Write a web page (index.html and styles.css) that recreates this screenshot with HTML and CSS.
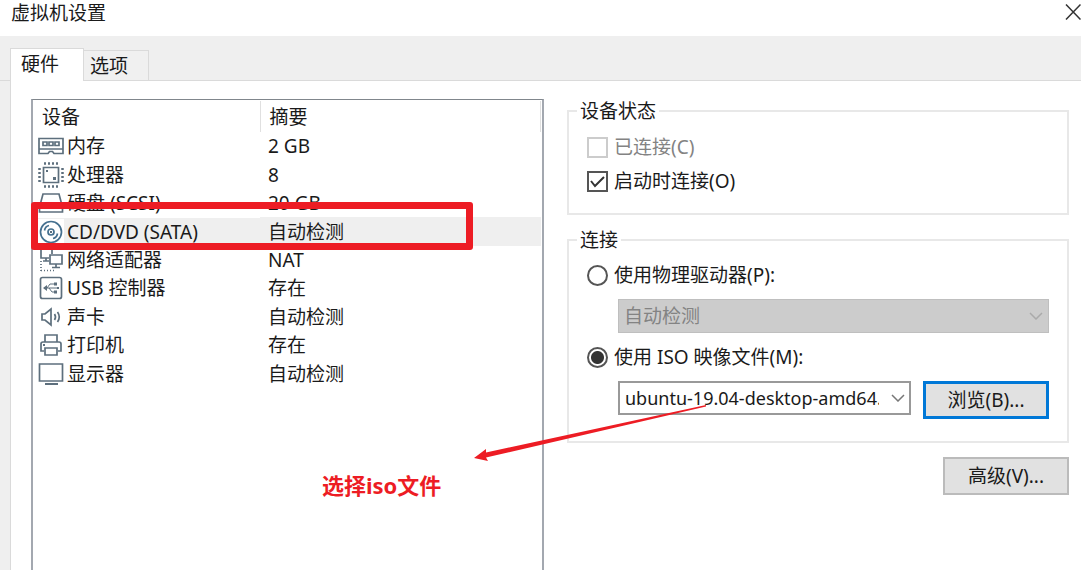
FILE: index.html
```html
<!DOCTYPE html>
<html lang="zh-CN">
<head>
    <meta charset="UTF-8">
    <meta name="viewport" content="width=device-width, initial-scale=1.0">
    <title>虚拟机设置</title>
    <link rel="stylesheet" href="styles.css">
</head>
<body>
    <div class="window">
        <header class="titlebar">
            <h1>虚拟机设置</h1>
            <button class="close-btn" aria-label="关闭">
                <svg width="16" height="16" viewBox="0 0 16 16"><path d="M1 0.5L15.5 15.5M15.5 0.5L1 15.5"/></svg>
            </button>
        </header>

        <div class="tabs">
            <button class="tab active">硬件</button>
            <button class="tab">选项</button>
        </div>

        <main class="panel">
            <div class="device-list">
                <table class="devices">
                    <thead>
                        <tr><th class="name-col">设备</th><th>摘要</th></tr>
                    </thead>
                    <tbody>
                        <tr>
                            <td><div class="device">
                                <svg class="icon" viewBox="0 0 26 26"><path d="M1 5.500h24v15H16l-1.500-2h-3l-1.500 2H1zM1 16h24M5 9h4v3.500H5zM11 9h4v3.500h-4zM17 9h4v3.500h-4z"/></svg>
                                内存</div></td>
                            <td>2 GB</td>
                        </tr>
                        <tr>
                            <td><div class="device">
                                <svg class="icon" viewBox="0 0 26 26"><path d="M5.500 5.500h15v15h-15z"/><path class="pins" d="M6 1.500h15M6 24.500h15M1.500 6v15M24.500 6v15"/><path class="fill" d="M8 8h2v2H8zM15 15h3v3h-3z"/></svg>
                                处理器</div></td>
                            <td>8</td>
                        </tr>
                        <tr>
                            <td><div class="device">
                                <svg class="icon" viewBox="0 0 26 26"><path d="M5 4h16l3.500 13v5h-23v-5zM1.500 17h23"/></svg>
                                硬盘 (SCSI)</div></td>
                            <td>20 GB</td>
                        </tr>
                        <tr class="selected">
                            <td><div class="device">
                                <svg class="icon disc" viewBox="0 0 26 26"><circle cx="13" cy="13" r="10.500"/><circle cx="13" cy="13" r="3"/><path class="fill" d="M12 12h2v2h-2z"/><path d="M6.500 11.500c.5-3 2-4.500 4.500-5M19.500 14.500c-.5 3-2 4.500-4.500 5"/></svg>
                                CD/DVD (SATA)</div></td>
                            <td>自动检测<span class="highlight-box"></span></td>
                        </tr>
                        <tr>
                            <td><div class="device">
                                <svg class="icon" viewBox="0 0 26 26"><path d="M11 11H3V1h11v6M5 14h6M8 11v3M12 8h12v9H12zM18 17v3M14 20.500h8"/><path class="dots" d="M3 14v10M3 23.500h14"/></svg>
                                网络适配器</div></td>
                            <td>NAT</td>
                        </tr>
                        <tr>
                            <td><div class="device">
                                <svg class="icon" viewBox="0 0 26 26"><rect x="2.500" y="2.500" width="21" height="21" rx="2"/><path class="thin" d="M6 13h14M9 13l3-4h4M11 13l3 4h3"/><path class="fill" d="M5 13l4-3v6zM16 7.500h3v3h-3zM16 15.500h3v3h-3zM19 12h2v2h-2z"/></svg>
                                USB 控制器</div></td>
                            <td>存在</td>
                        </tr>
                        <tr>
                            <td><div class="device">
                                <svg class="icon" viewBox="0 0 26 26"><path d="M4 10h3l6-5v16l-6-5H4zM16.500 10q2 3 0 6M19.500 8q3.500 5 0 10"/></svg>
                                声卡</div></td>
                            <td>自动检测</td>
                        </tr>
                        <tr>
                            <td><div class="device">
                                <svg class="icon" viewBox="0 0 26 26"><path d="M7 10V3h12v7M6 19H3v-7q0-2 2-2h16q2 0 2 2v7h-3M7 16h12v7H7z"/><path class="fill" d="M5 12h2v2H5z"/></svg>
                                打印机</div></td>
                            <td>存在</td>
                        </tr>
                        <tr>
                            <td><div class="device">
                                <svg class="icon" viewBox="0 0 26 26"><path d="M1.500 3h23v17h-23z"/><path class="fill" d="M7 22h13v2H7z"/></svg>
                                显示器</div></td>
                            <td>自动检测</td>
                        </tr>
                    </tbody>
                </table>
                <p class="note">选择iso文件</p>
                <svg class="arrow" viewBox="0 0 234 58"><path d="M0 54L12 45V48.500L232 1V2.500L12 53.500L14 57z"/></svg>
            </div>

            <div class="settings">
                <fieldset class="group status">
                    <legend>设备状态</legend>
                    <label class="option disabled"><input type="checkbox" disabled>已连接(C)</label>
                    <label class="option"><input type="checkbox" checked>启动时连接(O)</label>
                </fieldset>

                <fieldset class="group connection">
                    <legend>连接</legend>
                    <label class="option"><input type="radio" name="source">使用物理驱动器(P):</label>
                    <div class="source-row">
                        <div class="dropdown disabled">
                            <select aria-label="物理驱动器" disabled><option>自动检测</option></select>
                            <svg class="chevron" viewBox="0 0 14 8"><path d="M1 1l6 6 6-6"/></svg>
                        </div>
                    </div>
                    <label class="option"><input type="radio" name="source" checked>使用 ISO 映像文件(M):</label>
                    <div class="source-row">
                        <div class="dropdown iso-file">
                            <select aria-label="ISO 映像文件"><option>ubuntu-19.04-desktop-amd64.iso</option></select>
                            <svg class="chevron" viewBox="0 0 14 8"><path d="M1 1l6 6 6-6"/></svg>
                        </div>
                        <button class="btn default">浏览(B)...</button>
                    </div>
                </fieldset>

                <button class="btn advanced">高级(V)...</button>
            </div>
        </main>
    </div>
</body>
</html>
```

FILE: styles.css
```css
* {
    box-sizing: border-box;
}
body {
    margin: 0;
    background: #efefef;
    color: #1a1a1a;
    font-family: "Noto Sans", "Noto Sans CJK SC", sans-serif;
    font-size: 19px;
    line-height: 28px;
}
button, select, input {
    font: inherit;
    color: inherit;
    margin: 0;
}
.window {
    display: flex;
    flex-direction: column;
    height: 100vh;
    overflow: hidden;
}
.titlebar {
    display: flex;
    justify-content: space-between;
    align-items: flex-start;
    height: 36px;
    padding-left: 11px;
    background: #fff;
}
.titlebar h1 {
    margin: 0;
    font-size: 19px;
    font-weight: normal;
    line-height: 26px;
}
.close-btn {
    display: flex;
    padding: 4px 0;
    border: none;
    background: none;
}
.close-btn svg {
    fill: none;
    stroke: #333;
    stroke-width: 1.5;
}

/* tabs */
.tabs {
    display: flex;
    align-items: flex-end;
    height: 45px;
    padding-left: 10px;
    box-shadow: inset 0 -1px #dadada;
}
.tab {
    height: 31px;
    padding: 0 20px 0 6px;
    border: 1px solid #dadada;
    border-left: none;
    background: #f0f0f0;
    line-height: 28px;
}
.tab.active {
    height: 33px;
    padding: 0 24px 2px 10px;
    border-left: 1px solid #dadada;
    border-bottom: none;
    background: #fff;
}
.panel {
    flex: 1;
    display: grid;
    grid-template-columns: 513fr 502fr;
    gap: 23px;
    margin-left: 10px;
    padding: 18px 12px 0 20px;
    border-left: 1px solid #dadada;
    background: #fff;
}

/* device list */
.device-list {
    position: relative;
    padding: 1px 1px 0 0;
    border: 2px solid #a3a8b0;
    border-top-color: #80868c;
    border-top-width: 1px;
    border-bottom: none;
}
.devices {
    width: 100%;
    height: 287px;
    border-collapse: collapse;
    table-layout: fixed;
}
.devices th {
    height: 31px;
    padding: 0 9px;
    border-right: 1px solid #e0e0e0;
    font-weight: normal;
    text-align: left;
}
.devices .name-col {
    width: 227px;
}
.devices td {
    height: 28px;
    padding: 0 8px;
}
.devices td:first-child {
    padding: 0 0 0 5px;
}
.device {
    display: flex;
    align-items: center;
    gap: 3px;
}
.selected {
    position: relative;
}
.selected td:last-child,
.selected .device {
    background: #efefef;
}
.icon {
    width: 26px;
    height: 26px;
    background: #fff;
    fill: none;
    stroke: #5d6f7d;
    stroke-width: 1.7;
}
.icon.disc {
    stroke: #45708f;
}
.icon .pins {
    stroke-width: 2.5;
    stroke-dasharray: 2 2;
}
.icon .dots {
    stroke-dasharray: 1 2;
}
.icon .thin {
    stroke-width: 1;
}
.icon .fill {
    fill: #5d6f7d;
    stroke: none;
}

/* annotations */
.highlight-box {
    position: absolute;
    top: -15px;
    left: -2px;
    width: 87%;
    height: 48px;
    border: 7px solid #ed1c24;
    border-radius: 3px;
}
.note {
    position: absolute;
    top: 371px;
    left: 289px;
    margin: 0;
    color: #ed1c24;
    font-size: 22px;
    font-weight: bold;
}
.arrow {
    position: absolute;
    top: 304px;
    left: 441px;
    z-index: 1;
    width: 234px;
    height: 58px;
    fill: #ed1c24;
}

/* settings */
.settings {
    display: flex;
    flex-direction: column;
}
.group {
    min-width: 0;
    margin: 0;
    border: 2px solid #e8e8e8;
}
.group legend {
    margin-left: -10px;
    padding: 0 3px;
    line-height: 24px;
}
.status {
    height: 116px;
    padding: 7px 18px 0;
}
.connection {
    margin: 13px 0 14px;
    padding: 6px 18px 22px;
}
.option {
    display: flex;
    align-items: center;
    gap: 6px;
    height: 34px;
}
.option.disabled {
    color: #838383;
}
.option input {
    appearance: none;
    width: 21px;
    height: 21px;
    border: 2px solid #555;
}
.option input[type="checkbox"]:checked {
    background: url("data:image/svg+xml,%3Csvg xmlns='http://www.w3.org/2000/svg' viewBox='0 0 17 17'%3E%3Cpath d='M2 8l4 5 9-9' fill='none' stroke='%23333' stroke-width='2'/%3E%3C/svg%3E");
}
.option input:disabled {
    border-color: #ccc;
}
.option input[type="radio"] {
    border-radius: 50%;
}
.option input[type="radio"]:checked {
    background: radial-gradient(circle, #333 6px, #fff 7px);
}
.source-row {
    display: flex;
    gap: 12px;
    height: 48px;
    padding: 7px 0 0 31px;
}
.connection .source-row:last-child {
    height: auto;
}
.dropdown {
    position: relative;
    flex: 1;
    min-width: 0;
    height: 34px;
}
.dropdown select {
    appearance: none;
    width: 100%;
    height: 34px;
    padding: 0 30px 0 5px;
    border: 2px solid #999;
    border-radius: 0;
    background: #fff;
}
.dropdown.disabled select {
    border: 1px solid #bfbfbf;
    background: #ccc;
    color: #838383;
    opacity: 1;
}
.dropdown.iso-file select {
    font-size: 18px;
}
.chevron {
    position: absolute;
    top: 13px;
    right: 6px;
    width: 14px;
    height: 8px;
    fill: none;
    stroke: #777;
    stroke-width: 1.5;
    pointer-events: none;
}
.disabled .chevron {
    stroke: #aaa;
}
.btn {
    width: 126px;
    height: 38px;
    padding: 0;
    border: 2px solid #bbb;
    background: #e1e1e1;
}
.btn.default {
    border: 3px solid #0078d7;
}
.advanced {
    align-self: flex-end;
}
```
